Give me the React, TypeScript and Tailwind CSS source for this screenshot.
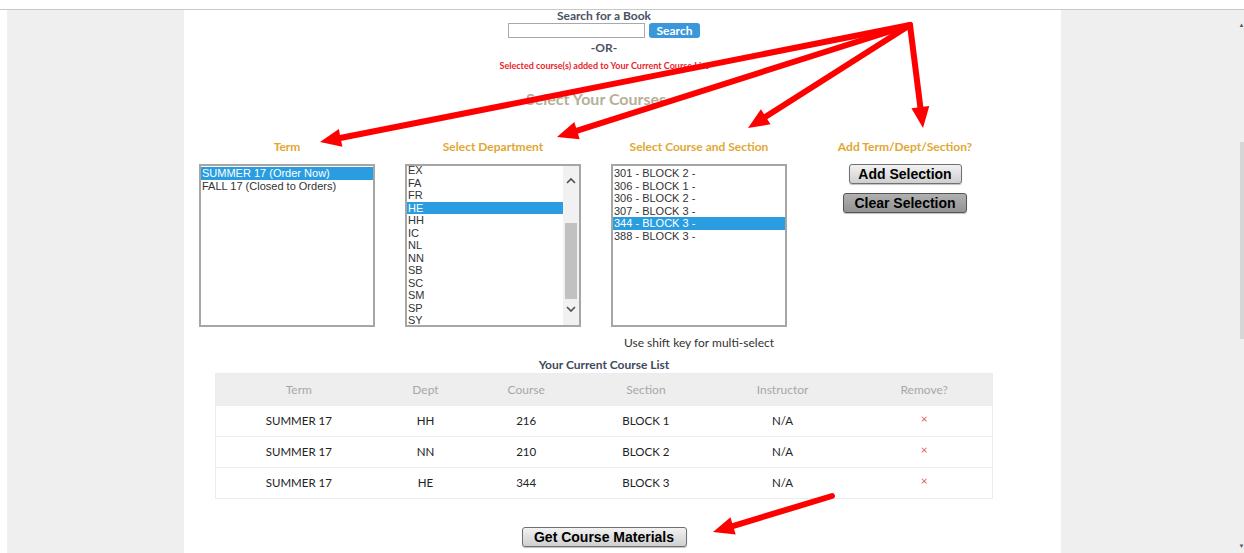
type Pt = [number, number];

const terms = ["SUMMER 17 (Order Now)", "FALL 17 (Closed to Orders)"];
const depts = ["EX", "FA", "FR", "HE", "HH", "IC", "NL", "NN", "SB", "SC", "SM", "SP", "SY"];
const courses = ["301 - BLOCK 2 -", "306 - BLOCK 1 -", "306 - BLOCK 2 -", "307 - BLOCK 3 -", "344 - BLOCK 3 -", "388 - BLOCK 3 -"];

const rows = [
  { term: "SUMMER 17", dept: "HH", course: "216", section: "BLOCK 1" },
  { term: "SUMMER 17", dept: "NN", course: "210", section: "BLOCK 2" },
  { term: "SUMMER 17", dept: "HE", course: "344", section: "BLOCK 3" },
];

const arrows: { from: Pt; to: Pt }[] = [
  { from: [910, 25], to: [320, 142] },
  { from: [910, 25], to: [557, 137] },
  { from: [910, 25], to: [748, 128] },
  { from: [910, 25], to: [923, 128] },
  { from: [832, 496], to: [713, 532] },
];

const Arrow = ({ from, to }: { from: Pt; to: Pt }) => {
  const [x1, y1] = from;
  const [x2, y2] = to;
  const len = Math.hypot(x2 - x1, y2 - y1);
  const ux = (x2 - x1) / len;
  const uy = (y2 - y1) / len;
  const bx = x2 - ux * 21;
  const by = y2 - uy * 21;
  const px = -uy * 9;
  const py = ux * 9;
  return (
    <g>
      <line x1={x1} y1={y1} x2={bx + ux * 3} y2={by + uy * 3} stroke="#ff0000" strokeWidth={6} strokeLinecap="round" />
      <polygon points={`${x2},${y2} ${bx + px},${by + py} ${bx - px},${by - py}`} fill="#ff0000" />
    </g>
  );
};

const Heading = ({ children }: { children: string }) => (
  <div className="text-[12px] leading-[12px] font-bold text-[#e2a733] text-center">{children}</div>
);

const ListBox = ({ items, selected, scroll }: { items: string[]; selected: number; scroll?: boolean }) => (
  <div className="mx-auto w-[176px] h-[163px] border-2 border-[#a6a6a6] bg-white flex overflow-hidden font-['Liberation_Sans',Arial,sans-serif] text-[11px] leading-[12.5px] text-[#333]">
    <div className={`flex-1 ${scroll ? "-mt-[2px]" : "pt-[1px]"}`}>
      {items.map((item, i) => (
        <div key={item + i} className={`pl-[1px] whitespace-nowrap ${i === selected ? "bg-[#2a9de0] text-white" : ""}`}>
          {item}
        </div>
      ))}
    </div>
    {scroll && (
      <div className="w-[16px] bg-[#f1f1f1] flex flex-col items-center">
        <svg width="12" height="10" viewBox="0 0 12 10" className="mt-[10px]">
          <path d="M2 7 L6 3 L10 7" fill="none" stroke="#505050" strokeWidth="1.6" />
        </svg>
        <div className="mt-[37px] w-[12px] h-[76px] bg-[#c1c1c1]" />
        <svg width="12" height="10" viewBox="0 0 12 10" className="mt-[5px]">
          <path d="M2 3 L6 7 L10 3" fill="none" stroke="#505050" strokeWidth="1.6" />
        </svg>
      </div>
    )}
  </div>
);

const GrayButton = ({ label, dark, className }: { label: string; dark?: boolean; className: string }) => (
  <div
    className={`h-[20px] flex items-center justify-center rounded-[3px] border font-['Liberation_Sans',Arial,sans-serif] font-bold text-[14px] text-black shadow-[0_1px_1px_rgba(0,0,0,0.25)] ${
      dark ? "border-[#555] bg-gradient-to-b from-[#b0b0b0] to-[#939393]" : "border-[#707070] bg-gradient-to-b from-[#f2f2f2] to-[#cfcfcf]"
    } ${className}`}
  >
    {label}
  </div>
);

const cols = ["w-[166px]", "w-[88px]", "w-[114px]", "w-[126px]", "w-[148px]", "w-[136px]"];

const CourseTable = () => (
  <div className="mt-[2px] w-[778px] border border-[#ececec] text-[11.5px] text-center">
    <div className="flex h-[31px] items-center bg-[#eeeeee] text-[12px] text-[#a8a8a8]">
      {["Term", "Dept", "Course", "Section", "Instructor", "Remove?"].map((h, i) => (
        <div key={h} className={cols[i]}>{h}</div>
      ))}
    </div>
    {rows.map((r) => (
      <div key={r.dept} className="flex h-[31px] items-center border-t border-[#eeeeee] text-[#222]">
        <div className={cols[0]}>{r.term}</div>
        <div className={cols[1]}>{r.dept}</div>
        <div className={cols[2]}>{r.course}</div>
        <div className={cols[3]}>{r.section}</div>
        <div className={cols[4]}>N/A</div>
        <div className={`${cols[5]} text-[#e25c5c] text-[12px] -mt-[4px]`}>×</div>
      </div>
    ))}
  </div>
);

export default function App() {
  return (
    <div className="relative w-[1244px] h-[553px] overflow-hidden bg-white font-['Lato','Open_Sans',sans-serif]">
      <div className="h-[9px] bg-white border-b border-[#c8c8c8] box-content" />
      <div className="flex h-[543px]">
        <div className="w-[7px] bg-white" />
        <div className="w-[177px] bg-[#efefef]" />

        <div className="w-[877px] bg-white flex flex-col">
          {/* book search */}
          <div className="ml-[31px] w-[778px] flex flex-col items-center text-[#4a5262]">
            <div className="text-[12px] leading-[11px] font-bold">Search for a Book</div>
            <div className="mt-[2px] flex gap-[4px] h-[15px]">
              <div className="w-[137px] h-[15px] border border-[#a9a9a9] bg-white" />
              <div className="w-[51px] h-[15px] rounded-[3px] bg-[#3a97d9] text-white text-[12px] leading-[15px] font-bold text-center">
                Search
              </div>
            </div>
            <div className="mt-[4px] text-[12px] leading-[12px] font-bold">-OR-</div>
            <div className="mt-[7px] text-[9px] leading-[10px] font-bold text-[#e8232b]">
              Selected course(s) added to Your Current Course List
            </div>
          </div>

          <div className="w-[824px] mt-[20px] text-center text-[16px] leading-[16px] font-bold text-[#b5b09a]">
            Select Your Courses
          </div>

          {/* term / department / course pickers */}
          <div className="w-[824px] mt-[34px] grid grid-cols-4">
            <div>
              <Heading>Term</Heading>
              <div className="mt-[11px]">
                <ListBox items={terms} selected={0} />
              </div>
            </div>
            <div>
              <Heading>Select Department</Heading>
              <div className="mt-[11px]">
                <ListBox items={depts} selected={3} scroll />
              </div>
            </div>
            <div>
              <Heading>Select Course and Section</Heading>
              <div className="mt-[11px]">
                <ListBox items={courses} selected={4} />
              </div>
              <div className="mt-[10px] text-[12px] leading-[12px] text-center text-[#333]">Use shift key for multi-select</div>
            </div>
            <div className="flex flex-col items-center">
              <Heading>Add Term/Dept/Section?</Heading>
              <GrayButton label="Add Selection" className="mt-[11px] w-[113px]" />
              <GrayButton label="Clear Selection" dark className="mt-[9px] w-[124px]" />
            </div>
          </div>

          {/* current course list */}
          <div className="ml-[31px] w-[778px] flex flex-col items-center">
            <div className="mt-[10px] text-[12px] leading-[12px] font-bold text-[#3d4a5c]">Your Current Course List</div>
            <CourseTable />
            <GrayButton label="Get Course Materials" className="mt-[28px] w-[165px]" />
          </div>
        </div>

        <div className="flex-1 bg-[#efefef] flex justify-end">
          <div className="w-[5px] flex flex-col items-center">
            <div className="mt-[12px] text-[6px] leading-[6px] text-[#555]">▲</div>
            <div className="mt-[114px] w-[4px] h-[197px] bg-[#d6d6d6]" />
            <div className="mt-auto mb-[4px] text-[6px] leading-[6px] text-[#555]">▼</div>
          </div>
        </div>
      </div>

      <svg className="absolute inset-0 pointer-events-none" width="1244" height="553">
        {arrows.map((a, i) => (
          <Arrow key={i} from={a.from} to={a.to} />
        ))}
      </svg>
    </div>
  );
}
